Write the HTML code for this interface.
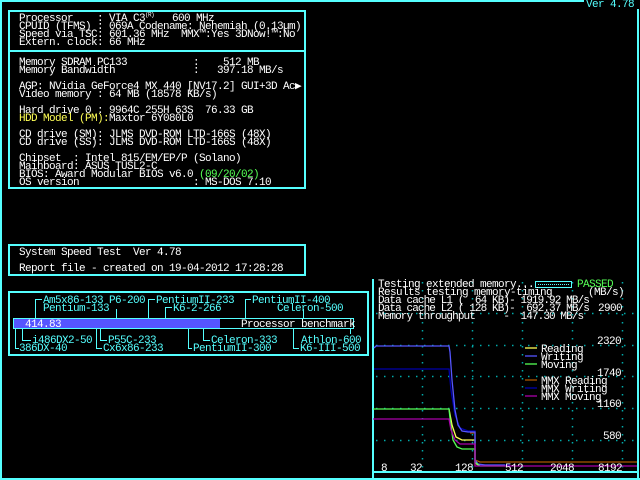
<!DOCTYPE html>
<html><head><meta charset="utf-8"><style>
html,body{margin:0;padding:0;background:#000;}
#s{position:relative;width:640px;height:480px;overflow:hidden;background:#000;}
.t{position:absolute;white-space:pre;font-family:"Liberation Mono",monospace;font-size:11px;line-height:8px;letter-spacing:-0.6px;color:#fff;padding-top:1px;}
.n{letter-spacing:-0.9px}
.c{color:#55ffff}.y{color:#ffff55}.g{color:#55ff55}
.b{position:absolute;border:2px solid #55ffff;box-sizing:border-box;}
.l{position:absolute;background:#55ffff;}
</style></head><body><div id="s">
<div class="l" style="left:0;top:0;width:584px;height:2px"></div>
<div class="l" style="left:0;top:0;width:2px;height:480px"></div>
<div class="l" style="left:637px;top:9px;width:2px;height:471px"></div>
<div class="l" style="left:0;top:478px;width:640px;height:2px"></div>
<div class="t c" style="left:586px;top:0">Ver 4.78</div>

<div class="b" style="left:8px;top:10px;width:298px;height:179px"></div>
<div class="l" style="left:8px;top:50px;width:298px;height:2px"></div>
<div class="t" style="left:19px;top:14px">Processor</div><div class="t" style="left:97px;top:14px">: VIA C3<sup style="font-size:6px;line-height:0">(R)</sup>   600 MHz</div>
<div class="t" style="left:19px;top:22px">CPUID (TFMS) : 069A Codename: Nehemiah (0.13µm)</div>
<div class="t" style="left:19px;top:30px">Speed via TSC: 601.36 MHz  MMX™:Yes 3DNow!™:No</div>
<div class="t" style="left:19px;top:38px">Extern. clock: 66 MHz</div>
<div class="t" style="left:19px;top:58px">Memory SDRAM PC133</div><div class="t" style="left:193px;top:58px">:    512 MB</div>
<div class="t" style="left:19px;top:66px">Memory Bandwidth</div><div class="t" style="left:193px;top:66px">:   397.18 MB/s</div>
<div class="t" style="left:19px;top:82px">AGP: NVidia GeForce4 MX 440 [NV17.2] GUI+3D Ac▶</div>
<div class="t" style="left:19px;top:90px">Video memory : 64 MB (18578 KB/s)</div>
<div class="t" style="left:19px;top:106px">Hard drive 0 : 9964C 255H 63S</div><div class="t" style="left:205px;top:106px">76.33 GB</div>
<div class="t y" style="left:19px;top:114px">HDD Model (PM):</div><div class="t" style="left:109px;top:114px">Maxtor 6Y080L0</div>
<div class="t" style="left:19px;top:130px">CD drive (SM): JLMS DVD-ROM LTD-166S (48X)</div>
<div class="t" style="left:19px;top:138px">CD drive (SS): JLMS DVD-ROM LTD-166S (48X)</div>
<div class="t" style="left:19px;top:154px">Chipset  : Intel 815/EM/EP/P (Solano)</div>
<div class="t" style="left:19px;top:162px">Mainboard: ASUS TUSL2-C</div>
<div class="t" style="left:19px;top:170px">BIOS: Award Modular BIOS v6.0 <span class="g">(09/20/02)</span></div>
<div class="t" style="left:19px;top:178px">OS version</div><div class="t" style="left:193px;top:178px">: MS-DOS 7.10</div>

<div class="b" style="left:8px;top:244px;width:298px;height:32px"></div>
<div class="t" style="left:19px;top:248px">System Speed Test  Ver 4.78</div>
<div class="t" style="left:19px;top:264px">Report file - created on 19-04-2012 17:28:28</div>

<div class="b" style="left:8px;top:291px;width:361px;height:65px"></div>
<div style="position:absolute;left:13px;top:318px;width:341px;height:11px;border:1px solid #55ffff;box-sizing:border-box"></div>
<div style="position:absolute;left:14px;top:319px;width:206px;height:9px;background:#5555ff"></div>
<div class="t" style="left:25px;top:320px">414.83</div>
<div class="t" style="left:241px;top:320px">Processor benchmark</div>
<svg style="position:absolute;left:0;top:0" width="640" height="480">
<g stroke="#55ffff" stroke-width="1" fill="none">
<path d="M35.5,318 V299.5 H42"/>
<path d="M116.5,318 V309"/>
<path d="M148.5,318 V299.5 H155"/>
<path d="M165.5,318 V307.5 H172"/>
<path d="M245.5,318 V299.5 H251"/>
<path d="M303.5,318 V309"/>
<path d="M15.5,329 V348.5 H19"/>
<path d="M22.5,329 V340.5 H31"/>
<path d="M96.5,329 V348.5 H102"/>
<path d="M100.5,329 V340.5 H107"/>
<path d="M188.5,329 V348.5 H192"/>
<path d="M203.5,329 V340.5 H210"/>
<path d="M293.5,329 V348.5 H299"/>
<path d="M350.5,329 V334"/>
</g></svg>
<div class="t c" style="left:43px;top:296px">Am5x86-133 P6-200</div>
<div class="t c" style="left:156px;top:296px">PentiumII-233</div>
<div class="t c" style="left:252px;top:296px">PentiumII-400</div>
<div class="t c" style="left:43px;top:304px">Pentium-133</div>
<div class="t c" style="left:173px;top:304px">K6-2-266</div>
<div class="t c" style="left:277px;top:304px">Celeron-500</div>
<div class="t c" style="left:32px;top:336px">i486DX2-50</div>
<div class="t c" style="left:108px;top:336px">P55C-233</div>
<div class="t c" style="left:211px;top:336px">Celeron-333</div>
<div class="t c" style="left:301px;top:336px">Athlon-600</div>
<div class="t c" style="left:19px;top:344px">386DX-40</div>
<div class="t c" style="left:103px;top:344px">Cx6x86-233</div>
<div class="t c" style="left:193px;top:344px">PentiumII-300</div>
<div class="t c" style="left:300px;top:344px">K6-III-500</div>

<div class="l" style="left:372px;top:279px;width:2px;height:200px"></div>
<div class="l" style="left:372px;top:471px;width:266px;height:2px"></div>
<svg style="position:absolute;left:0;top:0" width="640" height="480">
<g stroke="#00aaaa" stroke-width="1.5" stroke-dasharray="1.5 6.5" fill="none">
<path d="M376,313.5H636M376,345.5H636M376,376.5H636M376,408.5H636M376,440.5H636"/>
<path d="M422.5,282V470M472.5,282V470M522.5,282V470M572.5,282V470M622.5,282V470"/>
</g>
<g fill="none" stroke-width="1.3">
<path stroke="#aa5500" d="M470,433H475V460L480,462H637"/>
<path stroke="#ffff55" d="M449,409L452,425L456,437L462,440H475V463L480,466"/>
<path stroke="#0000aa" d="M374,369H449L451,390L455,415L460,428L468,431H475V462L480,465H510"/>
<path stroke="#5555ff" d="M374,348L376,346H449L450,352L452,380L455,410L458,425L462,431L468,432H475V460L478,464L485,465H505"/>
<path stroke="#55ff55" d="M373,409H449L450,418L453,440L457,447L462,449H475V462L480,466H505"/>
<path stroke="#aa00aa" d="M373,419H449L451,430L455,440L460,444H475V466H637"/>
<path stroke="#ffff55" d="M525,348H537"/>
<path stroke="#5555ff" d="M525,356H537"/>
<path stroke="#55ff55" d="M525,364H537"/>
<path stroke="#aa5500" d="M525,380H537"/>
<path stroke="#0000aa" d="M525,388H537"/>
<path stroke="#aa00aa" d="M525,396H537"/>
</g>
<rect x="535.5" y="281.5" width="36" height="6" fill="none" stroke="#55ffff"/>
<path d="M538,284.5H569" stroke="#55ffff" stroke-dasharray="1 1"/>
</svg>
<div class="t" style="left:378px;top:280px">Testing extended memory...</div>
<div class="t g" style="left:577px;top:280px">PASSED</div>
<div class="t" style="left:378px;top:288px">Results testing memory-timing</div><div class="t" style="left:588px;top:288px">(MB/s)</div>
<div class="t n" style="left:378px;top:296px">Data cache L1 (  64 KB)- 1919.92 MB/s</div>
<div class="t n" style="left:378px;top:304px">Data cache L2 ( 128 KB)-  692.37 MB/s</div><div class="t" style="left:598px;top:304px">2900</div>
<div class="t n" style="left:378px;top:312px">Memory throughput     -  147.30 MB/s</div>
<div class="t" style="left:597px;top:337px">2320</div>
<div class="t" style="left:597px;top:369px">1740</div>
<div class="t" style="left:597px;top:400px">1160</div>
<div class="t" style="left:603px;top:432px">580</div>
<div class="t" style="left:541px;top:345px">Reading</div>
<div class="t" style="left:541px;top:353px">Writing</div>
<div class="t" style="left:541px;top:361px">Moving</div>
<div class="t" style="left:541px;top:377px">MMX Reading</div>
<div class="t" style="left:541px;top:385px">MMX Writing</div>
<div class="t" style="left:541px;top:393px">MMX Moving</div>
<div class="t" style="left:381px;top:464px">8</div>
<div class="t" style="left:410px;top:464px">32</div>
<div class="t" style="left:455px;top:464px">128</div>
<div class="t" style="left:505px;top:464px">512</div>
<div class="t" style="left:550px;top:464px">2048</div>
<div class="t" style="left:598px;top:464px">8192</div>
</div></body></html>
